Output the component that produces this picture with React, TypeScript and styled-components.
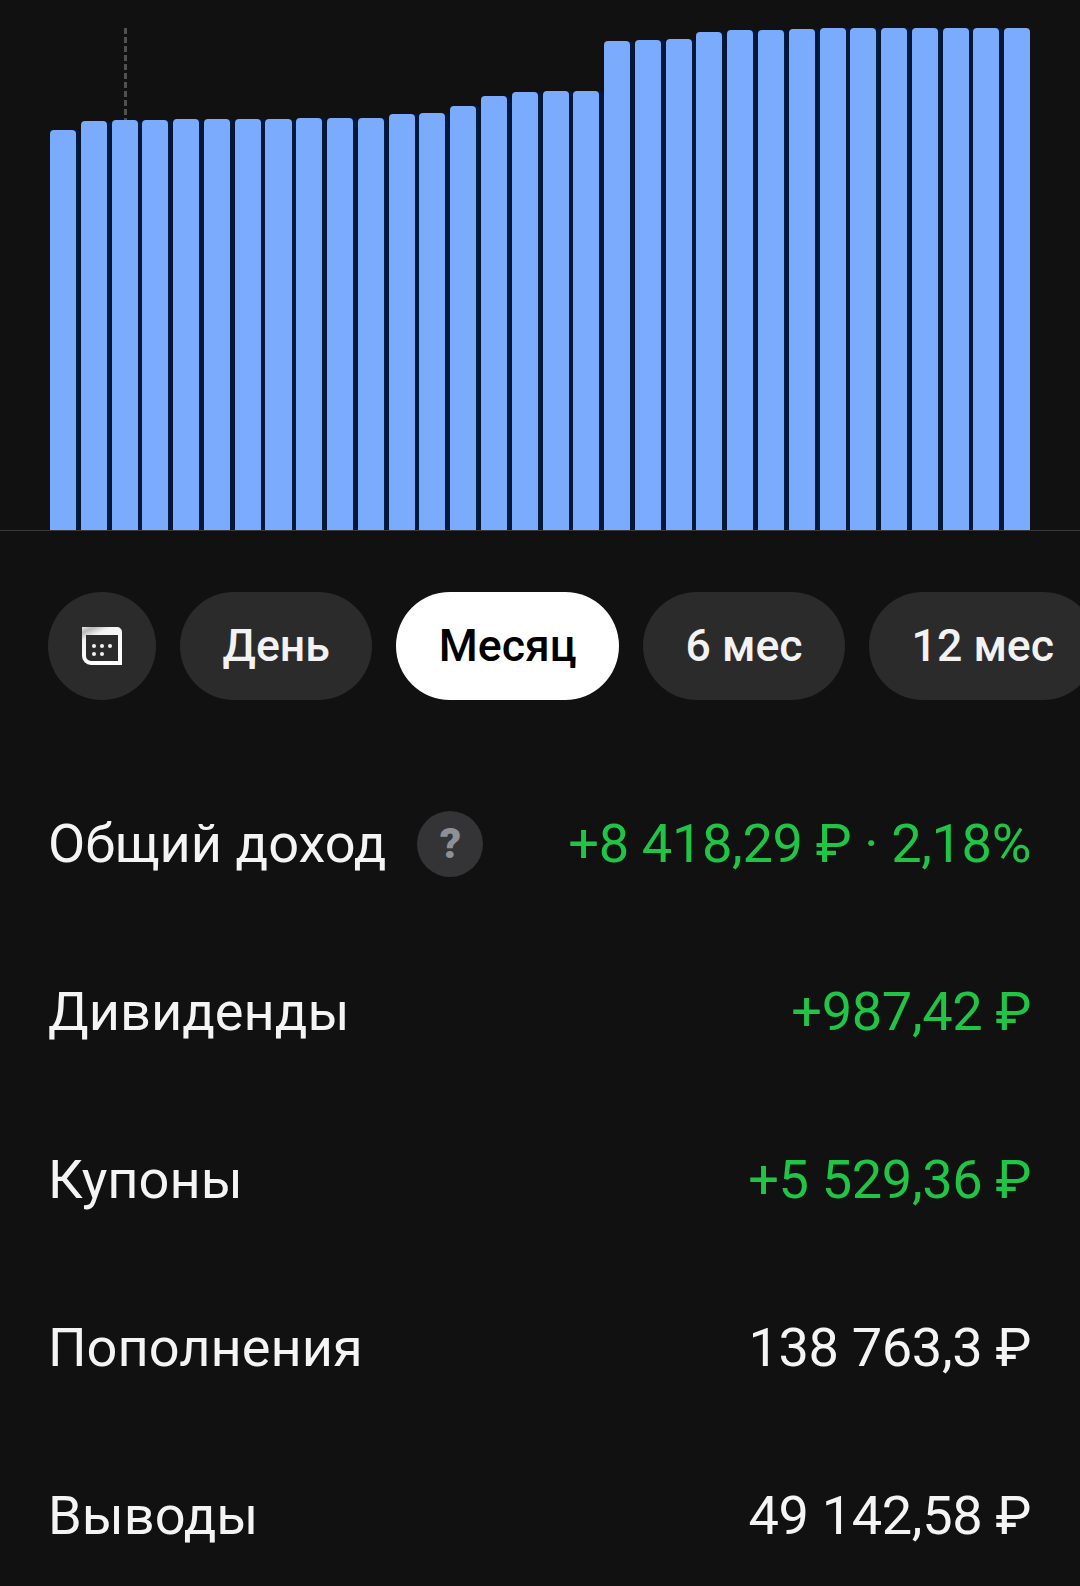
import React from "react";
import styled, { createGlobalStyle } from "styled-components";

const Global = createGlobalStyle`
  html, body { margin: 0; padding: 0; background: #111112; }
  body { font-family: Roboto, "Liberation Sans", sans-serif; }
`;

const Page = styled.div`
  width: 1080px;
  height: 1586px;
  overflow: hidden;
  background: #111112;
  display: flex;
  flex-direction: column;
`;

const Chart = styled.div`
  position: relative;
  flex: none;
  height: 531px;
  box-sizing: border-box;
  padding: 0 50px;
  border-bottom: 1px solid #3a3a3c;
  display: flex;
  align-items: flex-end;
  gap: 4.75px;
`;

const Bar = styled.div<{ $top: number }>`
  flex: 1 1 0;
  height: ${(p) => 530 - p.$top}px;
  background: #7aabfd;
  border-radius: 4px 4px 0 0;
  box-shadow: 4.75px 0 0 #00183a;
  &:last-of-type { box-shadow: none; }
`;

const Marker = styled.div`
  position: absolute;
  left: 123.5px;
  top: 28px;
  width: 3px;
  height: 92px;
  background: repeating-linear-gradient(to bottom, #515153 0 6px, transparent 6px 9px);
`;

const Periods = styled.div`
  flex: none;
  display: flex;
  gap: 24px;
  margin: 61px 0 0 48px;
`;

const Pill = styled.div<{ $active?: boolean }>`
  flex: none;
  height: 108px;
  padding: 0 42.5px;
  border-radius: 54px;
  display: flex;
  align-items: center;
  font-size: 44.6px;
  font-weight: 500;
  color: ${(p) => (p.$active ? "#000" : "#f2f2f3")};
  background: ${(p) => (p.$active ? "#fff" : "#2b2b2c")};
`;

const IconPill = styled(Pill)`
  width: 108px;
  padding: 0;
  justify-content: center;
`;

const Rows = styled.div`
  flex: none;
  display: flex;
  flex-direction: column;
  margin-top: 59px;
`;

const Row = styled.div`
  height: 168.2px;
  display: flex;
  align-items: center;
  justify-content: space-between;
  padding: 0 49px 0 48px;
  font-size: 54.15px;
  color: #f4f4f5;
`;

const Label = styled.div`
  display: flex;
  align-items: center;
  gap: 31px;
`;

const Hint = styled.div`
  width: 66px;
  height: 66px;
  margin-top: 1px;
  border-radius: 50%;
  background: #343436;
  color: #8e8f97;
  font-size: 42px;
  font-weight: 900;
  display: flex;
  align-items: center;
  justify-content: center;
`;

const Value = styled.div<{ $green?: boolean }>`
  letter-spacing: -0.35px;
  color: ${(p) => (p.$green ? "#20c545" : "#f4f4f5")};
`;

const tops = [130, 121, 120, 120, 118.5, 119, 119, 119, 118, 118, 118, 114, 113, 106, 96, 92, 91, 91, 41, 40, 39, 32, 30, 30, 29, 28, 28, 28, 28, 28, 28, 28];

const CalendarIcon = () => (
  <svg width="40" height="38" viewBox="0 0 40 38">
    <defs>
      <linearGradient id="calendarFill" x1="0" y1="0" x2="0.5" y2="1">
        <stop offset="0" stopColor="#e8e8e8" />
        <stop offset="0.12" stopColor="#b9b9ba" />
        <stop offset="0.3" stopColor="#f4f4f4" />
        <stop offset="1" stopColor="#fff" />
      </linearGradient>
    </defs>
    <path
      fillRule="evenodd"
      fill="url(#calendarFill)"
      d="M0 0H35a5 5 0 0 1 5 5V38H9a9 9 0 0 1-9-9ZM4 8V29a5 5 0 0 0 5 5H36V8Z"
    />
    <g fill="#f4f4f4">
      <circle cx="12" cy="19" r="2" />
      <circle cx="20" cy="19" r="2" />
      <circle cx="28" cy="19" r="2" />
      <circle cx="12" cy="27" r="2" />
      <circle cx="20" cy="27" r="2" />
    </g>
  </svg>
);

const rows: { label: string; value: string; green?: boolean; hint?: boolean }[] = [
  { label: "Общий доход", value: "+8 418,29 ₽ · 2,18%", green: true, hint: true },
  { label: "Дивиденды", value: "+987,42 ₽", green: true },
  { label: "Купоны", value: "+5 529,36 ₽", green: true },
  { label: "Пополнения", value: "138 763,3 ₽" },
  { label: "Выводы", value: "49 142,58 ₽" },
];

export default function App() {
  return (
    <Page>
      <Global />
      <Chart>
        <Marker />
        {tops.map((t, i) => (
          <Bar key={i} $top={t} />
        ))}
      </Chart>
      <Periods>
        <IconPill>
          <CalendarIcon />
        </IconPill>
        <Pill>День</Pill>
        <Pill $active>Месяц</Pill>
        <Pill>6 мес</Pill>
        <Pill>12 мес</Pill>
      </Periods>
      <Rows>
        {rows.map((r) => (
          <Row key={r.label}>
            <Label>
              {r.label}
              {r.hint && <Hint>?</Hint>}
            </Label>
            <Value $green={r.green}>{r.value}</Value>
          </Row>
        ))}
      </Rows>
    </Page>
  );
}
